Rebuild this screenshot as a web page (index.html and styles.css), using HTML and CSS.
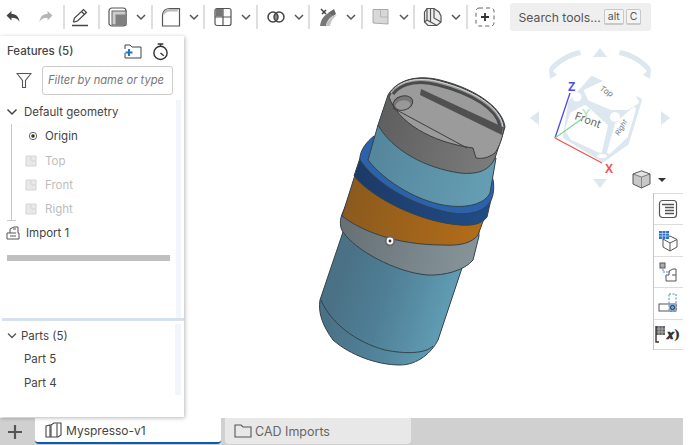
FILE: index.html
```html
<!DOCTYPE html>
<html lang="en">
<head>
<meta charset="utf-8">
<title>Myspresso-v1</title>
<link rel="stylesheet" href="styles.css">
</head>
<body>
<div class="app">
  <header class="toolbar">
    <div class="tool-plain">
      <svg class="ic" width="18" height="18" viewBox="0 0 18 18"><path d="M1.500 7.500 6.500 3V6C11 6 14 8.500 14.500 14 13 11 10.500 9.800 6.500 9.800V12.500Z" fill="#444"/></svg>
    </div>
    <div class="tool-plain">
      <svg class="ic" width="18" height="18" viewBox="0 0 18 18"><path d="M16.500 7.500 11.500 3V6C7 6 4 8.500 3.500 14 5 11 7.500 9.800 11.500 9.800V12.500Z" fill="#b5b5b5"/></svg>
    </div>
    <span class="sep"></span>
    <div class="tool-pen">
      <svg class="ic" width="20" height="20" viewBox="0 0 20 20" fill="none" stroke="#444" stroke-width="1.200"><path d="M3.500 14.500 4.500 11 13.500 2.500 16.500 5.500 7.500 14 4 15z"/><path d="M11.500 4.500 14.500 7.500"/><path d="M2 18.500H18" stroke-width="1.500"/></svg>
    </div>
    <span class="sep"></span>
    <div class="tool">
      <svg class="ic" width="20" height="20" viewBox="0 0 20 20"><rect x="1" y="1" width="17" height="18" rx="3" fill="#fff" stroke="#555" stroke-width="1.200"/><rect x="4" y="4" width="14" height="14" fill="#ccc" stroke="#666"/><rect x="7.500" y="7.500" width="10.500" height="10.500" fill="#808080"/></svg>
      <svg class="chev" width="12" height="8" viewBox="0 0 12 8"><path d="M2 2 6 6 10 2" fill="none" stroke="#555" stroke-width="1.500"/></svg>
    </div>
    <span class="sep"></span>
    <div class="tool">
      <svg class="ic" width="20" height="20" viewBox="0 0 20 20"><path d="M1.500 19V8C2 4 5 1.500 9 1.500H18.500V19z" fill="#fff" stroke="#555" stroke-width="1.200"/><path d="M2 7C3 4 6 2 9 2H18L16 4.500H9C6 4.500 4 6 3 8z" fill="#bbb"/></svg>
      <svg class="chev" width="12" height="8" viewBox="0 0 12 8"><path d="M2 2 6 6 10 2" fill="none" stroke="#555" stroke-width="1.500"/></svg>
    </div>
    <span class="sep"></span>
    <div class="tool">
      <svg class="ic" width="20" height="20" viewBox="0 0 20 20"><rect x="2" y="1.500" width="16" height="17" rx="2" fill="#fff" stroke="#555" stroke-width="1.200"/><rect x="2.500" y="2" width="7" height="7.500" fill="#777"/><path d="M10 1.500V18.500M2 10H18" stroke="#555" stroke-width="1.200"/></svg>
      <svg class="chev" width="12" height="8" viewBox="0 0 12 8"><path d="M2 2 6 6 10 2" fill="none" stroke="#555" stroke-width="1.500"/></svg>
    </div>
    <span class="sep"></span>
    <div class="tool">
      <svg class="ic" width="20" height="20" viewBox="0 0 20 20"><path d="M10 6.500a5 5 0 0 1 0 7 5 5 0 0 1 0-7z" fill="#888"/><circle cx="7" cy="10" r="5" fill="none" stroke="#444" stroke-width="1.500"/><circle cx="13" cy="10" r="5" fill="none" stroke="#444" stroke-width="1.500"/></svg>
      <svg class="chev" width="12" height="8" viewBox="0 0 12 8"><path d="M2 2 6 6 10 2" fill="none" stroke="#555" stroke-width="1.500"/></svg>
    </div>
    <span class="sep"></span>
    <div class="tool">
      <svg class="ic" width="20" height="20" viewBox="0 0 20 20"><path d="M2 19C3 12 6 8 11 6L15 9C11 11 9 14 8 19z" fill="#777"/><path d="M8 19C9 14 12 11 15 9L19 8C15 11 13 14 12 19z" fill="#c4c4c4"/><path d="M3 2 8 7M8 3 4 7" stroke="#444" stroke-width="1.500"/><path d="M10 6 16 2 18 7 15 9z" fill="#666"/></svg>
      <svg class="chev" width="12" height="8" viewBox="0 0 12 8"><path d="M2 2 6 6 10 2" fill="none" stroke="#555" stroke-width="1.500"/></svg>
    </div>
    <span class="sep"></span>
    <div class="tool">
      <svg class="ic" width="20" height="20" viewBox="0 0 20 20"><path d="M2 2.500H17V17L2 16z" fill="#d8d8d8" stroke="#aaa"/><path d="M9.500 2.500V10H17" fill="none" stroke="#b5b5b5"/></svg>
      <svg class="chev" width="12" height="8" viewBox="0 0 12 8"><path d="M2 2 6 6 10 2" fill="none" stroke="#555" stroke-width="1.500"/></svg>
    </div>
    <span class="sep"></span>
    <div class="tool">
      <svg class="ic" width="20" height="20" viewBox="0 0 20 20" fill="none" stroke="#555" stroke-width="1.200"><path d="M1.500 5 4 1.500H11L16 5 18 9V15L14 18.500H5L1.500 15z" fill="#eee"/><path d="M4 1.500V13L1.500 15M4 13 14 18.500M11 1.500V11L18 15M7.500 1.500V15"/></svg>
      <svg class="chev" width="12" height="8" viewBox="0 0 12 8"><path d="M2 2 6 6 10 2" fill="none" stroke="#555" stroke-width="1.500"/></svg>
    </div>
    <span class="sep"></span>
    <div class="tool-add">
      <svg width="20" height="20" viewBox="0 0 20 20"><rect x="1" y="1" width="18" height="18" rx="3" fill="none" stroke="#666" stroke-dasharray="4 3"/><path d="M10 6V14M6 10H14" stroke="#333" stroke-width="1.800"/></svg>
    </div>
    <div class="search">
      <span class="search-label">Search tools...</span>
      <kbd class="key">alt</kbd>
      <kbd class="key">C</kbd>
    </div>
  </header>

  <main class="main">
    <svg class="stage" width="499" height="383" viewBox="184 35 499 383">
      <defs>
        <linearGradient id="gBody" gradientUnits="userSpaceOnUse" x1="335" y1="290" x2="440" y2="325"><stop offset="0" stop-color="#4a7186"/><stop offset=".45" stop-color="#4f7f96"/><stop offset="1" stop-color="#5f9bb2"/></linearGradient>
        <linearGradient id="gSec" gradientUnits="userSpaceOnUse" x1="375" y1="150" x2="495" y2="190"><stop offset="0" stop-color="#55879c"/><stop offset="1" stop-color="#669fb5"/></linearGradient>
        <linearGradient id="gGrey" gradientUnits="userSpaceOnUse" x1="345" y1="225" x2="475" y2="265"><stop offset="0" stop-color="#677175"/><stop offset="1" stop-color="#87959b"/></linearGradient>
        <linearGradient id="gOrange" gradientUnits="userSpaceOnUse" x1="345" y1="200" x2="485" y2="240"><stop offset="0" stop-color="#8a5a1e"/><stop offset="1" stop-color="#b56d18"/></linearGradient>
        <linearGradient id="gDark" gradientUnits="userSpaceOnUse" x1="355" y1="170" x2="490" y2="210"><stop offset="0" stop-color="#1c3a66"/><stop offset="1" stop-color="#204c86"/></linearGradient>
        <linearGradient id="gCap" gradientUnits="userSpaceOnUse" x1="380" y1="120" x2="500" y2="160"><stop offset="0" stop-color="#5f5f5f"/><stop offset="1" stop-color="#7d7d7d"/></linearGradient>
      </defs>

      <g stroke="#34424a" stroke-width="1">
        <path d="M343 232 320 300C318 312 322 325 333 340 350 355 377 365 400 365 418 365 432 352 438 340L462 268Z" fill="url(#gBody)"/>
        <path d="M321 300C330 322 355 342 385 350 405 354 425 354 433 346" fill="none"/>
        <path d="M343 212C339 220 340 228 343 232 355 250 395 272 427 275 445 276 465 270 473 260L479 236 478 215 350 195Z" fill="url(#gGrey)"/>
        <path d="M355 175 342 216C360 230 395 245 443 245 460 246 472 243 478 235L489 205 400 170Z" fill="url(#gOrange)"/>
        <path d="M360 158 354 176C372 198 420 222 460 225 472 226 482 224 487 217L492 195 420 150Z" fill="url(#gDark)"/>
        <path d="M374 136C366 142 359 152 360 160 372 178 400 200 442 211 465 217 483 213 490 202 494 196 495 185 492 176Z" fill="#2c61ab"/>
        <path d="M378 125 368 160C385 182 420 203 450 206 470 208 485 203 490 193L496 158Z" fill="url(#gSec)"/>
        <path d="M388 95 378 125C392 150 425 168 460 173 478 175 490 170 495 158L505 127C503 110 480 90 440 80 420 75 398 78 388 95Z" fill="url(#gCap)"/>
      </g>
      <path d="M389 97C398 78 420 75 440 81 480 91 503 110 504 128 502 142 497 150 495 153 488 158 482 159 476 158L473 148C430 142 398 122 389 97Z" fill="#9b9b9b" stroke="#3d3d3d"/>
      <path d="M393 94C402 82 422 80 438 85 474 94 497 110 500 126" fill="none" stroke="#4b4b4b" stroke-width="3"/>
      <path d="M391 93C400 79 421 77 440 82 478 92 501 109 503 127" fill="none" stroke="#d8d8d8"/>
      <path d="M421 89 503 127 502 135 420 95Z" fill="#505050"/>
      <path d="M393 108 467 148" stroke="#3d3d3d" fill="none"/>
      <ellipse cx="403" cy="103" rx="10" ry="7" transform="rotate(-15 403 103)" fill="#777" stroke="#3d3d3d"/>
      <ellipse cx="403" cy="105" rx="7.500" ry="4.500" transform="rotate(-10 403 105)" fill="#989898"/>

      <circle cx="390" cy="241" r="4.300" fill="#fff" stroke="#666" stroke-width="1.800"/>
      <circle cx="390" cy="241" r="1.400" fill="#333"/>

      <g fill="#dde7ef">
        <path d="M600 48 607 57H593Z"/>
        <path d="M530 118 539 111V125Z"/>
        <path d="M670 118 661 111V125Z"/>
        <path d="M600 188 593 179H607Z"/>
        <path d="M581 55C568 58 559 64 553 71L557 75 550 79 549 70 550 67C556 60 567 52 580 50Z"/>
        <path d="M619 55C632 58 641 64 647 71L643 75 650 79 651 70 650 67C644 60 633 52 620 50Z"/>
        <path d="M592 78 640 100 627 143 603 160 565 137 570 103Z" stroke="#dde7ef" stroke-width="4" stroke-linejoin="round"/>
      </g>
      <g fill="#fff" stroke="#fff" stroke-width="4" stroke-linejoin="round">
        <path d="M586 91 610 80 632 94 637 102 627 108 611 108 590 99Z"/>
        <path d="M572 114 585 107 606 126 600 151 572 138 567 130Z"/>
        <path d="M617 124 634 109 626 136 609 152Z"/>
      </g>
      <g fill="#fff">
        <circle cx="577" cy="97" r="4.500"/>
        <circle cx="615" cy="117" r="5"/>
        <ellipse cx="602" cy="156" rx="5" ry="2"/>
      </g>
      <g font-family="Inter, 'Liberation Sans', sans-serif" fill="#777">
        <text class="cube-top" transform="translate(599 90) rotate(30)">Top</text>
        <text class="cube-front" transform="translate(574 119) rotate(20)">Front</text>
        <text class="cube-right" transform="translate(619 136) rotate(-60)">Right</text>
      </g>
      <path d="M555 138 570 93" stroke="#4a4ae8" stroke-width="1.300"/>
      <path d="M555 138 602 163" stroke="#f05050" stroke-width="1.300"/>
      <path d="M555 138 583 118" stroke="#7fd99a" stroke-width="1.300"/>
      <g font-family="'Liberation Sans', sans-serif" font-weight="700" font-size="12">
        <text x="568" y="91" fill="#4a4ae8">Z</text>
        <text x="605" y="173" fill="#f05050">X</text>
        <text x="582" y="118" fill="#9fe0b0" font-weight="400">Y</text>
      </g>

      <path d="M641.500 171 650 174V184L641.500 188 633 184V174Z" fill="#c8c8c8" stroke="#555"/>
      <path d="M633 174 641.500 177 650 174 641.500 171Z" fill="#e4e4e4" stroke="#555" stroke-width=".7"/>
      <path d="M641.500 177V188" stroke="#777" stroke-width=".8"/>
      <path d="M658 178H666L662 182Z" fill="#333"/>
    </svg>

    <aside class="panel">
      <div class="panel-head">
        <span class="panel-title">Features (5)</span>
        <svg class="head-ic-a" width="18" height="16" viewBox="0 0 18 16"><path d="M1 6V2H6L8 4H17V15H1V10" fill="none" stroke="#444"/><path d="M5 6V13M1.500 9.500H8.500" stroke="#1d78c4" stroke-width="2"/></svg>
        <svg class="head-ic-b" width="17" height="19" viewBox="0 0 18 19"><circle cx="9" cy="11" r="7" fill="none" stroke="#333" stroke-width="1.500"/><path d="M6 1.500H12M9 2V4M9 11 12.500 14" stroke="#333" stroke-width="1.500"/></svg>
      </div>
      <div class="filter-row">
        <svg class="filter-ic" width="16" height="17" viewBox="0 0 16 17"><path d="M1 1.500H15L9.500 8.500V15.500L8 15.500 6.500 15.500V8.500Z" fill="none" stroke="#555" stroke-width="1.100"/></svg>
        <div class="filter-input">Filter by name or type</div>
      </div>
      <div class="tree-wrap">
        <div class="tree">
          <div class="row row-head">
            <svg class="chev-tree" width="12" height="8" viewBox="0 0 12 8"><path d="M1.500 1.500 6 6 10.500 1.500" fill="none" stroke="#444" stroke-width="1.500"/></svg>
            <span>Default geometry</span>
          </div>
          <div class="branch">
            <div class="row row-origin">
              <svg class="origin-ic" width="10" height="10" viewBox="0 0 10 10"><circle cx="5" cy="5" r="3.700" fill="none" stroke="#666"/><circle cx="5" cy="5" r="1.800" fill="#333"/></svg>
              <span>Origin</span>
            </div>
            <div class="row row-off">
              <svg class="plane-ic" width="12" height="12" viewBox="0 0 12 12"><path d="M1 1H11V11H1Z" fill="#e8e8e8" stroke="#d5d5d5"/><path d="M6 1V6H11" fill="none" stroke="#d5d5d5"/></svg>
              <span>Top</span>
            </div>
            <div class="row row-off">
              <svg class="plane-ic" width="12" height="12" viewBox="0 0 12 12"><path d="M1 1H11V11H1Z" fill="#e8e8e8" stroke="#d5d5d5"/><path d="M6 1V6H11" fill="none" stroke="#d5d5d5"/></svg>
              <span>Front</span>
            </div>
            <div class="row row-off">
              <svg class="plane-ic" width="12" height="12" viewBox="0 0 12 12"><path d="M1 1H11V11H1Z" fill="#e8e8e8" stroke="#d5d5d5"/><path d="M6 1V6H11" fill="none" stroke="#d5d5d5"/></svg>
              <span>Right</span>
            </div>
          </div>
          <div class="row row-import">
            <svg class="import-ic" width="14" height="14" viewBox="0 0 14 14" fill="none" stroke="#555"><path d="M1 7H4V3L8 1H12V7H13V13H1Z"/><path d="M4 7H10M4 10H10M7 3H10"/></svg>
            <span>Import 1</span>
          </div>
          <div class="rollback"></div>
        </div>
        <div class="track"></div>
      </div>
      <div class="divider"></div>
      <div class="parts-wrap">
        <div class="parts">
          <div class="row row-parts">
            <svg class="chev-parts" width="10" height="7" viewBox="0 0 10 7"><path d="M1 1.500 5 5.500 9 1.500" fill="none" stroke="#555" stroke-width="1.300"/></svg>
            <span>Parts (5)</span>
          </div>
          <div class="row part">Part 5</div>
          <div class="row part">Part 4</div>
        </div>
        <div class="track track-parts"></div>
      </div>
    </aside>

    <nav class="side-tools">
      <div class="side-tool">
        <svg width="20" height="20" viewBox="0 0 20 20" fill="none" stroke="#555"><rect x="1.500" y="1.500" width="17" height="17" rx="3" stroke-width="1.200"/><path d="M4 5.500H16M7 8.500H16M7 11.500H16M7 14.500H16" stroke-width="1.300"/></svg>
      </div>
      <div class="side-tool">
        <svg width="20" height="22" viewBox="0 0 20 22" fill="none" stroke="#555"><path d="M5 9 12 6 19 9.500V17L12 21 5 17Z"/><path d="M5 9 12 13 19 9.500M12 13V21"/><rect x="1" y="1" width="10" height="8" fill="#2f6fc8" stroke="none"/><path d="M1 3.500H11M1 6H11M4.300 1V9M7.600 1V9" stroke="#cfe0f5" stroke-width=".7"/></svg>
      </div>
      <div class="side-tool">
        <svg width="20" height="20" viewBox="0 0 20 20" fill="none" stroke="#555"><rect x="2" y="1" width="5" height="5" fill="#aaa"/><path d="M5 7V10H12" stroke="#4a86d0" stroke-dasharray="2 1"/><path d="M8 13H11V9L15 7H18V19H8Z"/><path d="M14 13H18"/></svg>
      </div>
      <div class="side-tool">
        <svg width="20" height="20" viewBox="0 0 20 20" fill="none"><rect x="11" y="1" width="7" height="17" stroke="#4a86d0" stroke-dasharray="2 1.500"/><rect x="1" y="11" width="17" height="7" stroke="#555"/><rect x="11" y="11" width="7" height="7" fill="#7ea6d8"/><circle cx="14.500" cy="14.500" r="2" stroke="#333"/></svg>
      </div>
      <div class="side-tool">
        <svg class="fx-grid" width="11" height="18" viewBox="0 0 11 18"><rect x="1" y="1" width="9" height="9" fill="#666"/><path d="M1 4H10M1 7H10M4 1V10M7 1V10" stroke="#ccc" stroke-width=".6"/><path d="M1 1V17H4" fill="none" stroke="#333" stroke-width="1.400"/></svg>
        <span class="fx">𝒙)</span>
      </div>
    </nav>
  </main>

  <footer class="tabs">
    <div class="tab-add">
      <svg width="14" height="14" viewBox="0 0 14 14"><path d="M7 0V14M0 7H14" stroke="#555" stroke-width="2.200"/></svg>
    </div>
    <div class="tab tab-active">
      <svg width="18" height="16" viewBox="0 0 18 16" fill="#fff" stroke="#444" stroke-width="1.100"><path d="M1 4 5 3V15H1Z"/><path d="M6 3 9 1H16V13L13 15H6Z"/><path d="M12 1.500V15"/></svg>
      <span>Myspresso-v1</span>
    </div>
    <div class="tab tab-idle">
      <svg width="18" height="14" viewBox="0 0 18 14" fill="none" stroke="#555" stroke-width="1.100"><path d="M1 13V1H7L9 3H17V13Z"/></svg>
      <span>CAD Imports</span>
    </div>
  </footer>
</div>
</body>
</html>
```
FILE: styles.css
```css
* { box-sizing: border-box; }
html, body { margin: 0; padding: 0; background: #fff; }
body { font-family: Inter, "Liberation Sans", sans-serif; color: #444; font-size: 11.500px; overflow: hidden; }

.app { width: 683px; height: 445px; display: flex; flex-direction: column; }

/* toolbar */
.toolbar { height: 35px; flex: none; display: flex; align-items: center; }
.sep { width: 2px; height: 24px; background: #dedede; flex: none; margin-top: -2px; }
.tool-plain { width: 31.500px; flex: none; display: flex; justify-content: center; padding-right: 4px; margin-top: -2px; }
.tool-pen { width: 33px; flex: none; display: flex; justify-content: center; padding-right: 3px; margin-top: -2px; }
.tool { width: 50.500px; flex: none; display: flex; align-items: center; padding-left: 8px; margin-top: -2px; }
.tool .chev { margin-left: 7px; }
.tool-add { width: 42px; flex: none; display: flex; padding-left: 7px; margin-top: -2px; }
.search { width: 141px; height: 28px; flex: none; margin-top: -1px; background: #efefef; border-radius: 3px; display: flex; align-items: center; padding-left: 9px; gap: 2px; font-size: 12.200px; color: #555; }
.search-label { margin-right: 1px; }
.key { font: inherit; font-size: 10.500px; background: #f4f4f4; border: 1px solid #c8c8c8; border-bottom-width: 2px; border-radius: 2px; height: 16px; line-height: 13px; padding: 0 3px; color: #555; }

/* main area */
.main { position: relative; flex: 1; min-height: 0; }
.stage { position: absolute; left: 184px; top: 0; }
.cube-top { font-size: 8px; font-style: italic; }
.cube-front { font-size: 11px; fill: #666; }
.cube-right { font-size: 7px; font-style: italic; }

/* features panel */
.panel { position: relative; width: 184px; height: 381px; margin-top: 1px; background: #fff; box-shadow: 1px 1px 4px rgba(0, 0, 0, .28); display: flex; flex-direction: column; }
.panel-head { height: 27px; flex: none; display: flex; align-items: center; padding: 3px 0 0 7px; }
.panel-title { font-weight: 500; color: #444; width: 117px; }
.head-ic-a { margin-right: 10px; }
.filter-row { height: 32px; flex: none; display: flex; align-items: center; padding-left: 16px; margin-top: 1px; }
.filter-ic { margin-right: 10px; }
.filter-input { width: 131px; height: 29px; border: 1px solid #ccc; border-radius: 3px; padding-left: 5px; font-style: italic; color: #777; line-height: 27px; font-size: 11.200px; white-space: nowrap; }

.tree-wrap { height: 218px; flex: none; display: flex; margin-top: 4px; }
.tree { width: 176px; flex: none; }
.track { width: 5px; flex: none; background: #f2f6fa; }
.row { display: flex; align-items: center; height: 24.300px; white-space: nowrap; }
.row-head { padding-left: 6px; }
.chev-tree { margin-right: 6px; }
.branch { border-left: 1px solid #c8c8c8; margin-left: 11px; height: 97px; position: relative; }
.branch::after { content: ""; position: absolute; left: -5px; bottom: 0; width: 9px; height: 1px; background: #c8c8c8; }
.row-origin { padding-left: 16px; }
.origin-ic { margin-right: 7px; }
.row-off { color: #bdbdbd; padding-left: 13px; }
.plane-ic { margin-right: 8px; }
.row-import { padding-left: 6px; }
.import-ic { margin-right: 6px; }
.rollback { height: 6px; background: #c0c0c0; margin: 9px 6px 0 7px; }

.divider { height: 3px; flex: none; background: #d5e1ec; margin-left: 2px; }
.parts-wrap { display: flex; margin-top: 3px; height: 71px; flex: none; }
.parts { width: 175px; flex: none; }
.track-parts { width: 6px; }
.row-parts { padding-left: 7px; height: 23px; }
.chev-parts { margin-right: 4px; }
.part { padding-left: 24px; }

/* right-hand tools */
.side-tools { position: absolute; left: 653px; top: 158px; width: 30px; border-left: 1px solid #c4c4c4; background: #fff; display: flex; flex-direction: column; }
.side-tool { height: 31.400px; border-top: 1px solid #ddd; display: flex; align-items: center; justify-content: center; padding-right: 2px; }
.side-tool:last-child { border-bottom: 1px solid #ddd; }
.fx { font-family: "DejaVu Serif", serif; font-size: 13px; font-weight: 700; color: #333; line-height: 1; }

/* tabs */
.tabs { height: 27px; flex: none; background: #d0d0d0; display: flex; }
.tab-add { width: 35px; display: flex; align-items: center; justify-content: center; padding-right: 6px; }
.tab { width: 186px; height: 26px; flex: none; display: flex; align-items: center; gap: 3px; border-radius: 0 0 4px 4px; }
.tab-active { background: #fff; border-bottom: 2px solid #0a5cad; color: #444; padding-left: 10px; font-size: 12px; }
.tab-idle { background: #e8e8e8; margin-left: 4px; color: #666; padding-left: 9px; font-size: 12.500px; }
```
